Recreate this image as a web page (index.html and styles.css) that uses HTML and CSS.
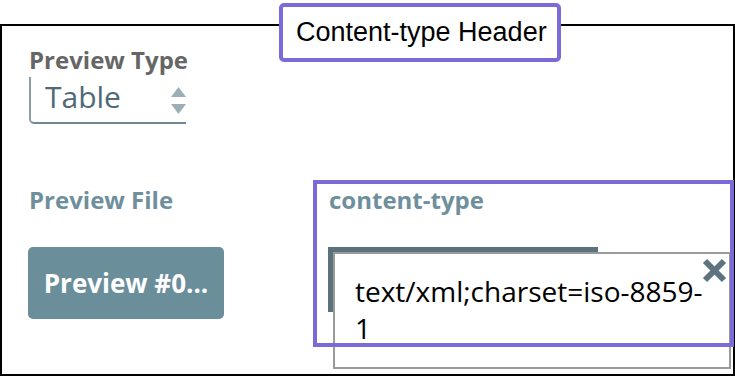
FILE: index.html
```html
<!DOCTYPE html>
<html lang="en">
<head>
    <meta charset="UTF-8">
    <meta name="viewport" content="width=device-width, initial-scale=1.0">
    <title>Content-type Header</title>
    <link rel="stylesheet" href="styles.css">
</head>
<body>
    <div class="page">
        <div class="frame">
            <div class="field">
                <div class="label label-dark">Preview Type</div>
                <div class="select">
                    <span>Table</span>
                    <svg class="spinner" width="15" height="28" viewBox="0 0 15 28">
                        <polygon points="7.5,0 15,10 0,10" fill="#9cafb6"/>
                        <polygon points="0,17 15,17 7.5,27" fill="#9cafb6"/>
                    </svg>
                </div>
            </div>

            <div class="row">
                <div class="field file-field">
                    <div class="label">Preview File</div>
                    <button class="preview-btn">Preview #0...</button>
                </div>
                <div class="field ct-field">
                    <div class="label">content-type</div>
                    <div class="input-wrap">
                        <div class="input"></div>
                        <div class="popup">
                            <div class="popup-text">text/xml;charset=iso-8859-1</div>
                            <svg class="close" width="25" height="25" viewBox="0 0 25 25">
                                <path d="M3 3 L22 22 M22 3 L3 22" stroke="#5d7480" stroke-width="6"/>
                            </svg>
                        </div>
                    </div>
                </div>
            </div>

            <!-- annotation box -->
            <div class="highlight"></div>
        </div>

        <div class="callout">Content-type Header</div>
    </div>
</body>
</html>
```

FILE: styles.css
```css
body {
    margin: 0;
    background: #fff;
    font-family: 'Open Sans', sans-serif;
    overflow: hidden;
}

.page {
    position: relative;
    width: 735px;
    height: 376px;
    padding-top: 24px;
    box-sizing: border-box;
}

.frame {
    position: relative;
    width: 735px;
    height: 352px;
    box-sizing: border-box;
    border: 2px solid #000;
    padding: 19px 0 0 27px;
}

.label {
    font-size: 24px;
    font-weight: bold;
    line-height: 30px;
    color: #6f8f9c;
}

.label-dark {
    color: #666;
}

.select {
    width: 157px;
    height: 47px;
    margin-top: 2px;
    box-sizing: border-box;
    border-left: 2px solid #8d9ea6;
    border-bottom: 2px solid #6f8893;
    border-bottom-left-radius: 5px;
    padding-left: 14px;
    display: flex;
    justify-content: space-between;
    font-size: 30px;
    line-height: 40px;
    color: #4e6a78;
}

.spinner {
    margin-top: 10px;
}

.row {
    display: flex;
    margin-top: 61px;
}

.file-field {
    width: 300px;
}

.preview-btn {
    display: block;
    margin-top: 32px;
    margin-left: -1px;
    width: 196px;
    height: 72px;
    border: none;
    border-radius: 5px;
    background: #6b8e9b;
    color: #fff;
    font-family: 'Open Sans', sans-serif;
    font-size: 26px;
    font-weight: bold;
    padding: 0;
}

.input-wrap {
    position: relative;
    margin-top: 32px;
    margin-left: -1px;
}

.input {
    width: 270px;
    height: 65px;
    box-sizing: border-box;
    border: 5px solid #5b717b;
}

.popup {
    position: absolute;
    left: 5px;
    top: 5px;
    width: 398px;
    height: 117px;
    box-sizing: border-box;
    border: 2px solid #9a9a9a;
    background: #fff;
    padding: 19px 0 0 20px;
}

.popup-text {
    width: 356px;
    font-size: 28px;
    line-height: 37px;
    color: #000;
}

.close {
    position: absolute;
    right: 2px;
    top: 4px;
}

.highlight {
    position: absolute;
    left: 311px;
    top: 154px;
    width: 421px;
    height: 167px;
    box-sizing: border-box;
    border: 4px solid #7b6ad8;
}

.callout {
    position: absolute;
    left: 279px;
    top: 3px;
    width: 282px;
    height: 59px;
    box-sizing: border-box;
    border: 4px solid #7b6ad8;
    border-radius: 5px;
    background: #fff;
    padding-left: 13px;
    font-family: 'Liberation Sans', Arial, sans-serif;
    font-size: 27px;
    line-height: 51px;
    color: #000;
}
```
